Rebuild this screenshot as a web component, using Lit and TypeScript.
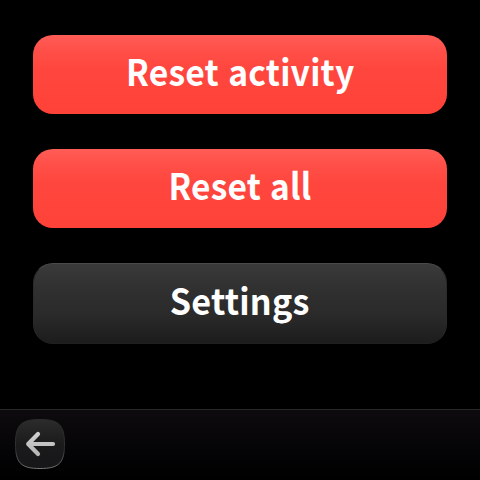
import { LitElement, html, css, svg } from "lit";
import { customElement, property } from "lit/decorators.js";

@customElement("menu-button")
class MenuButton extends LitElement {
  @property() label = "";
  @property() tone = "danger";
  @property({ type: Number }) stretch = 0.95;

  static styles = css`
    :host { display: block; }
    .button {
      box-sizing: border-box;
      width: 100%;
      height: 79px;
      margin: 0;
      padding: 0 0 9px;
      border: 0;
      border-radius: 20px;
      display: flex;
      align-items: center;
      justify-content: center;
      color: #fff;
      font: 700 36px/48px "Noto Sans CJK SC", "Noto Sans", sans-serif;
      letter-spacing: 0.2px;
      word-spacing: 1.5px;
      white-space: pre;
    }
    .danger {
      background: linear-gradient(#ff5d57 0, #ff5049 14px, #ff463e 34px, #ff4238 100%);
    }
    .neutral {
      height: 81px;
      padding-bottom: 9px;
      border: 1px solid #2a2a2a;
      border-top-color: #4a4a4a;
      border-bottom-color: #202020;
      background: linear-gradient(#3a3a3a 0, #303030 25px, #2a2a2a 52px, #1c1c1c 100%);
    }
  `;

  render() {
    return html`<button class="button ${this.tone}">
      <span style="transform:scaleX(${this.stretch})">${this.label}</span>
    </button>`;
  }
}

@customElement("back-button")
class BackButton extends LitElement {
  static styles = css`
    :host { display: block; width: 52px; height: 52px; }
    svg { display: block; }
  `;

  render() {
    const shape = "M26 1.5C45 1.5 50.5 7 50.5 26S45 50.5 26 50.5S1.5 45 1.5 26S7 1.5 26 1.5Z";
    return html`<svg width="52" height="52" viewBox="0 0 52 52" role="img" aria-label="Back">
      ${svg`
        <defs>
          <linearGradient id="fill" x2="0" y2="1">
            <stop offset="0" stop-color="#2c2c2c" />
            <stop offset=".5" stop-color="#1b1b1c" />
            <stop offset="1" stop-color="#161618" />
          </linearGradient>
          <linearGradient id="rim" x2="0" y2="1">
            <stop offset="0" stop-color="#2b2b2b" />
            <stop offset=".6" stop-color="#303030" />
            <stop offset="1" stop-color="#747474" />
          </linearGradient>
          <linearGradient id="arrow" gradientUnits="userSpaceOnUse" x1="0" y1="14" x2="0" y2="38">
            <stop offset="0" stop-color="#d2d2d2" />
            <stop offset="1" stop-color="#b4b4b4" />
          </linearGradient>
        </defs>
        <path d=${shape} fill="url(#fill)" stroke="url(#rim)" />
        <path d="M24 16L14.2 26L24 36M15 26H39" fill="none" stroke="url(#arrow)"
          stroke-width="4.2" stroke-linecap="round" stroke-linejoin="round" />
      `}
    </svg>`;
  }
}

@customElement("app-root")
class AppRoot extends LitElement {
  static styles = css`
    :host {
      display: flex;
      flex-direction: column;
      width: 480px;
      height: 480px;
      overflow: hidden;
      background: #000;
    }
    .menu {
      flex: 1;
      display: flex;
      flex-direction: column;
      gap: 35px;
      padding: 35px 33px 0;
    }
    .toolbar {
      box-sizing: border-box;
      height: 72px;
      padding: 10px 14px 0;
      background:
        linear-gradient(#292829, #292829) 0 1px / 100% 1px no-repeat,
        linear-gradient(#000 1px, #0e0b0e 1px, #050406 55%, #000);
    }
  `;

  render() {
    return html`
      <div class="menu">
        <menu-button label="Reset activity" .stretch=${0.935}></menu-button>
        <menu-button label="Reset all" .stretch=${0.93}></menu-button>
        <menu-button label="Settings" tone="neutral" .stretch=${0.948}></menu-button>
      </div>
      <div class="toolbar"><back-button></back-button></div>
    `;
  }
}
